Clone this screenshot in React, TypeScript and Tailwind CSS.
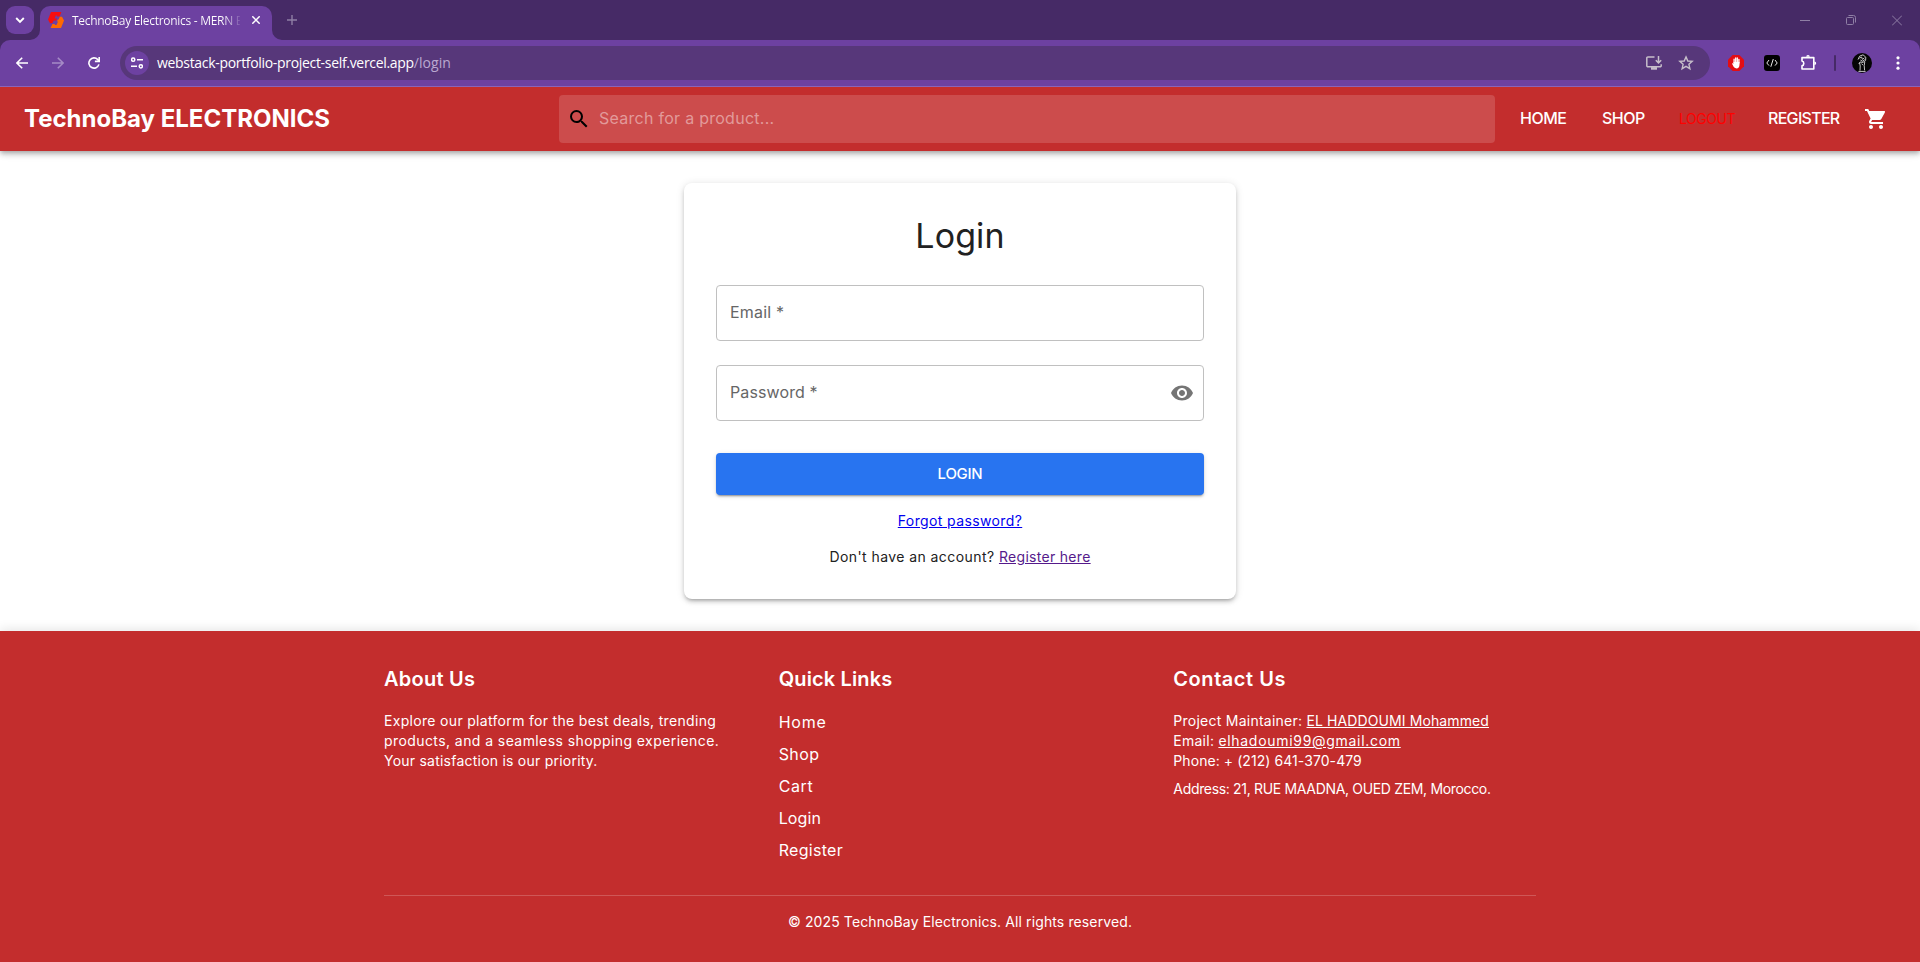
import React from "react";
import { MdSearch, MdShoppingCart, MdVisibility } from "react-icons/md";

const CHROME_FONT = "font-['Open_Sans','Noto_Sans',sans-serif]";

function Favicon() {
  return (
    <svg width="16" height="16" viewBox="0 0 16 16">
      <path d="M3 0H13.4L11.6 4.6H8.9L9.4 3.4H7.8L6.5 6.6H9L8.2 8.4H5.6L4.4 11.2H2L0 7.4Z" fill="#f90d0d" />
      <path d="M13 16H2.6L4.4 11.9H7.1L6.6 12.9H8.5L10.1 9.4H8.9L9.8 7.4H10.7L11.8 4.8H14L16 8.6Z" fill="#ff6a00" />
    </svg>
  );
}

function TabStrip() {
  return (
    <div className="flex h-10 items-start bg-[#462a66] pl-1.5">
      <button className="mt-1.5 flex h-7 w-7 items-center justify-center rounded-[9px] bg-[#6d41a1]">
        <svg width="10" height="10" viewBox="0 0 10 10" fill="none" stroke="#fff" strokeWidth="1.9">
          <path d="M1.2 3L5 6.8L8.8 3" />
        </svg>
      </button>
      <svg className="mt-[30px] ml-[-4px]" width="10" height="10" viewBox="0 0 10 10">
        <path d="M10 0V10H0A10 10 0 0 0 10 0Z" fill="#6d41a1" />
      </svg>
      <div className="mt-1.5 flex h-[34px] w-[232px] items-start rounded-t-[10px] bg-[#6d41a1] pt-1.5 pl-2">
        <Favicon />
        <div
          className={`mt-px ml-2 h-4 w-[168px] bg-linear-to-r from-white from-[90%] to-white/10 to-[100%] bg-clip-text text-xs leading-4 tracking-[-0.29px] whitespace-nowrap text-transparent ${CHROME_FONT}`}
        >
          TechnoBay Electronics - MERN E
        </div>
        <svg className="mt-1 ml-3" width="8" height="8" viewBox="0 0 8 8" stroke="#fff" strokeWidth="1.5">
          <path d="M0.3 0.3L7.7 7.7M7.7 0.3L0.3 7.7" />
        </svg>
      </div>
      <svg className="mt-[30px]" width="10" height="10" viewBox="0 0 10 10">
        <path d="M0 0V10H10A10 10 0 0 1 0 0Z" fill="#6d41a1" />
      </svg>
      <svg className="mt-[15px] ml-[5px]" width="10" height="10" viewBox="0 0 10 10" stroke="#8f7fa5" strokeWidth="1.4">
        <path d="M5 0V10M0 5H10" />
      </svg>
      <div className="mt-[15px] mr-[18px] ml-auto flex gap-9 text-[#8f7fa5]">
        <svg width="10" height="11" viewBox="0 0 10 11" stroke="currentColor">
          <path d="M0 5.5H10" />
        </svg>
        <svg width="10" height="11" viewBox="0 0 10 11" fill="none" stroke="currentColor">
          <rect x="0.5" y="2.5" width="7" height="7" rx="1" />
          <path d="M2.5 0.5H7.5A2 2 0 0 1 9.5 2.5V7.5" />
        </svg>
        <svg width="10" height="11" viewBox="0 0 10 11" stroke="currentColor">
          <path d="M0 0.5L10 10.5M10 0.5L0 10.5" />
        </svg>
      </div>
    </div>
  );
}

function Toolbar() {
  return (
    <div className="relative z-20 bg-[#462a66]">
      <div className="flex h-[47px] items-start rounded-t-[10px] border-b border-[#8b64b8] bg-[#6d41a1] pt-1.5">
        <div className="flex h-[34px] items-center pl-4">
          <svg width="12" height="12" viewBox="0 0 12 12" fill="none" stroke="#fff" strokeWidth="1.6">
            <path d="M12 6H1M6.2 0.7L0.9 6L6.2 11.3" />
          </svg>
          <svg className="ml-6" width="12" height="12" viewBox="0 0 12 12" fill="none" stroke="#a58bc6" strokeWidth="1.6">
            <path d="M0 6H11M5.8 0.7L11.1 6L5.8 11.3" />
          </svg>
          <svg className="ml-6" width="12" height="12" viewBox="0 0 12 12" fill="none" stroke="#fff" strokeWidth="1.6">
            <path d="M10.9 7.4A5.1 5.1 0 1 1 9.8 2.6L11 4" />
            <path d="M11.2 0V4.4H6.9" />
          </svg>
        </div>
        <div className="ml-5 flex h-[34px] w-[1590px] items-center rounded-full bg-[#57377a] pl-[5px]">
          <div className="flex h-6 w-6 items-center justify-center rounded-full bg-[#6d41a1]">
            <svg width="12" height="12" viewBox="0 0 12 12" fill="none" stroke="#fff" strokeWidth="1.5">
              <circle cx="2.2" cy="2.7" r="1.6" />
              <path d="M6 2.7H12M0 9.3H6" />
              <circle cx="9.8" cy="9.3" r="1.6" />
            </svg>
          </div>
          <div className={`ml-2 text-sm leading-5 tracking-[-0.319px] whitespace-nowrap text-white ${CHROME_FONT}`}>
            webstack-portfolio-project-self.vercel.app
            <span className="tracking-[0.05px] text-[#baa8d0]">/login</span>
          </div>
          <div className="ml-auto flex items-center gap-4 pr-4">
            <svg width="16" height="14" viewBox="0 0 16 14" fill="none" stroke="#c7bfca" strokeWidth="1.5">
              <path d="M8.5 0.9H1.9A1.1 1.1 0 0 0 0.8 2V9.7A1.1 1.1 0 0 0 1.9 10.8H14.1A1.1 1.1 0 0 0 15.2 9.7V8.3" />
              <path d="M12.5 0V6.6M9.8 4.2L12.5 6.9L15.2 4.2" />
              <path d="M5 12.4H11" strokeWidth="2.6" />
            </svg>
            <svg width="16" height="16" viewBox="0 0 16 16" fill="none" stroke="#c7bfca" strokeWidth="1.4">
              <path d="M8 1.9L9.8 6L14.2 6.4L10.9 9.3L11.9 13.7L8 11.4L4.1 13.7L5.1 9.3L1.8 6.4L6.2 6Z" />
            </svg>
          </div>
        </div>
        <div className="flex h-[34px] items-center pl-[18px]">
          <svg width="16" height="16" viewBox="0 0 16 16">
            <path d="M4.7 0H11.3L16 4.7V11.3L11.3 16H4.7L0 11.3V4.7Z" fill="#e40d13" />
            <path
              d="M6.1 8V4.2M7.7 8V2.8M9.3 8V3M10.9 8V4.4"
              stroke="#fff"
              strokeWidth="1.3"
              strokeLinecap="round"
            />
            <path d="M5.5 7H11.5V9.8C11.5 12.2 10.3 13.4 8.6 13.4C6.6 13.4 5.6 12.4 4 8.6C4.4 8 5 8.2 5.5 9Z" fill="#fff" />
          </svg>
          <svg className="ml-5" width="16" height="16" viewBox="0 0 16 16" fill="none" stroke="#e8e8e8" strokeWidth="1">
            <rect width="16" height="16" rx="3" fill="#000" stroke="none" />
            <path d="M5 5L2.8 8L5 10.6M11 5L13.2 8L11 10.6M9.3 4L6.8 11.8" />
          </svg>
          <svg className="ml-5" width="18" height="18" viewBox="0 0 18 18" fill="none" stroke="#fff" strokeWidth="1.6">
            <path d="M2 3.6H13.8V15H2V11.8C4.4 11.2 4.4 7.6 2 7Z" strokeLinejoin="round" />
            <path d="M6.2 2.8A1.8 1.8 0 0 1 9.8 2.8ZM14.4 7.4A1.8 1.8 0 0 1 14.4 11Z" fill="#fff" stroke="none" />
          </svg>
          <div className="ml-4 h-4 w-0.5 rounded-full bg-[#462a66]" />
          <svg className="ml-4" width="20" height="20" viewBox="0 0 20 20" fill="none" stroke="#d9d9d9" strokeWidth="0.9">
            <circle cx="10" cy="10" r="10" fill="#050505" stroke="none" />
            <path d="M6 6.6L7.6 3.2L11 1.8L13.8 4.2L13.6 7.4L11 9.4L8 9L6.8 11" />
            <path d="M7.4 5.2L9.6 4L10.4 6.4L12.4 4.8M8.4 7L10.6 8.2L12.6 6.6" />
            <path d="M7.6 9.8L8.2 13L8 17.6M12.8 8.6L12.2 12.6L12.6 17.4M9.6 10.6L11 12.2" />
            <path d="M6.4 18.4H13.6" strokeWidth="0.9" />
          </svg>
          <svg className="ml-6" width="4" height="14" viewBox="0 0 4 14" fill="#fff">
            <circle cx="2" cy="1.8" r="1.6" />
            <circle cx="2" cy="7" r="1.6" />
            <circle cx="2" cy="12.2" r="1.6" />
          </svg>
        </div>
      </div>
    </div>
  );
}

function SiteHeader() {
  return (
    <header className="relative z-10 flex h-16 items-center bg-[#c32d2d] pl-6 text-white shadow-[0_2px_4px_-1px_rgba(0,0,0,0.2),0_4px_5px_0_rgba(0,0,0,0.14),0_1px_10px_0_rgba(0,0,0,0.12)]">
      <div className="w-[535px] text-2xl leading-8 font-bold whitespace-nowrap">TechnoBay ELECTRONICS</div>
      <div className="flex h-12 w-[936px] items-center rounded bg-white/15 pl-2">
        <MdSearch size={24} color="#000" />
        <span className="ml-2 pb-0.5 text-base leading-6 tracking-[0.27px] text-[#e29a9a]">Search for a product...</span>
      </div>
      <nav className="flex items-center pl-[25px] text-base leading-6 font-medium">
        <span className="w-[82px] pb-0.5 tracking-[-0.5px]">HOME</span>
        <span className="w-[77px] pb-0.5 tracking-[-0.505px]">SHOP</span>
        <span className="w-[89px] text-sm leading-5 font-normal tracking-[-0.459px] text-[#ff0000]">LOGOUT</span>
        <span className="w-24 pb-0.5 tracking-[-0.7px]">REGISTER</span>
        <MdShoppingCart size={24} />
      </nav>
    </header>
  );
}

function LoginCard() {
  return (
    <div className="w-[552px] rounded-lg bg-white p-8 text-[#212121] shadow-[0_3px_3px_-2px_rgba(0,0,0,0.2),0_3px_4px_0_rgba(0,0,0,0.14),0_1px_8px_0_rgba(0,0,0,0.12)]">
      <h1 className="text-center text-[34px] leading-[42px] font-normal tracking-[0.1px]">Login</h1>
      <div className="mt-7 flex h-14 items-center rounded border border-[#c0c0c0] px-[13px] text-[#666]">
        <span className="pb-0.5 tracking-[0.189px]">Email *</span>
      </div>
      <div className="mt-6 flex h-14 items-center justify-between rounded border border-[#c0c0c0] pr-[9px] pl-[13px] text-[#666]">
        <span className="pb-0.5 tracking-[0.117px]">Password *</span>
        <MdVisibility size={24} color="#757575" />
      </div>
      <button className="mt-8 flex h-[42px] w-full items-center justify-center rounded bg-[#2874f0] text-[15px] font-medium tracking-[-0.289px] text-white shadow-[0_3px_1px_-2px_rgba(0,0,0,0.2),0_2px_2px_0_rgba(0,0,0,0.14),0_1px_5px_0_rgba(0,0,0,0.12)]">
        LOGIN
      </button>
      <p className="mt-4 text-center text-sm leading-5">
        <a className="tracking-[0.38px] text-[#0000ee] underline">Forgot password?</a>
      </p>
      <p className="mt-4 text-center text-sm leading-5 tracking-[0.43px]">
        Don't have an account? <a className="tracking-[0.3px] text-[#551a8b] underline">Register here</a>
      </p>
    </div>
  );
}

function SiteFooter() {
  return (
    <footer className="flex-1 bg-[#c32d2d] pt-8 text-white shadow-[0_-2px_10px_0_rgba(0,0,0,0.1)]">
      <div className="mx-auto w-[1152px]">
        <div className="grid grid-cols-3 gap-8 border-b border-white/20 pb-8">
          <section>
            <h2 className="text-xl leading-8 font-semibold tracking-[0.247px]">About Us</h2>
            <p className="mt-4 text-sm leading-5 whitespace-nowrap">
              <span className="block tracking-[0.315px]">Explore our platform for the best deals, trending</span>
              <span className="block tracking-[0.42px]">products, and a seamless shopping experience.</span>
              <span className="block tracking-[0.23px]">Your satisfaction is our priority.</span>
            </p>
          </section>
          <section>
            <h2 className="text-xl leading-8 font-semibold tracking-[0.14px]">Quick Links</h2>
            <ul className="-mt-px flex flex-col gap-2 pt-4 pb-px text-base leading-6">
              <li className="tracking-[0.8px]">Home</li>
              <li className="tracking-[0.4px]">Shop</li>
              <li className="tracking-[0.6px]">Cart</li>
              <li className="tracking-[0.1px]">Login</li>
              <li className="tracking-[0.3px]">Register</li>
            </ul>
          </section>
          <section className="text-sm leading-5 whitespace-nowrap">
            <h2 className="text-xl leading-8 font-semibold tracking-[0.55px]">Contact Us</h2>
            <p className="mt-4 tracking-[0.25px]">
              Project Maintainer: <a className="tracking-[0.1px] underline">EL HADDOUMI Mohammed</a>
            </p>
            <p className="tracking-[0.25px]">
              Email: <a className="tracking-[0.7px] underline">elhadoumi99@gmail.com</a>
            </p>
            <p className="tracking-[0.07px]">Phone: + (212) 641-370-479</p>
            <p className="mt-2 tracking-[-0.33px]">Address: 21, RUE MAADNA, OUED ZEM, Morocco.</p>
          </section>
        </div>
        <p className="mt-4 text-center text-sm leading-5 tracking-[0.118px]">
          © 2025 TechnoBay Electronics. All rights reserved.
        </p>
      </div>
    </footer>
  );
}

export default function App() {
  return (
    <div className="flex h-[962px] w-[1920px] flex-col overflow-hidden bg-white font-['Inter',sans-serif]">
      <TabStrip />
      <Toolbar />
      <SiteHeader />
      <main className="flex justify-center py-8">
        <LoginCard />
      </main>
      <SiteFooter />
    </div>
  );
}
